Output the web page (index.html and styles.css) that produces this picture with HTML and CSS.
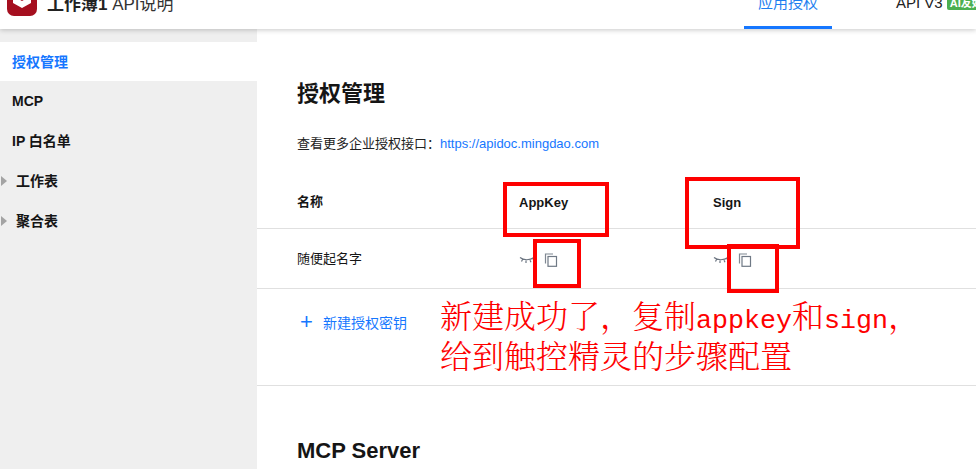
FILE: index.html
```html
<!DOCTYPE html>
<html lang="zh-CN">
<head>
    <meta charset="UTF-8">
    <meta name="viewport" content="width=device-width, initial-scale=1.0">
    <title>API说明</title>
    <link rel="stylesheet" href="styles.css">
</head>
<body>
    <header class="topbar">
        <div class="brand">
            <svg class="brand-logo" width="30" height="28" viewBox="0 0 30 28">
                <path d="M7 -10h16a7 7 0 0 1 7 7v21a7 7 0 0 1 -7 7h-16a7 7 0 0 1 -7 -7v-21a7 7 0 0 1 7 -7z" fill="#a50f1f"/>
                <path d="M6 5l9 5 9-5v7l-9 5-9-5z" fill="#fff"/>
                <path d="M6 3l9-4 9 4-9 5z" fill="#e7a7ad"/>
            </svg>
            <span class="brand-name"><b>工作薄1</b> API说明</span>
        </div>
        <nav class="tabs">
            <a class="tab tab-active">应用授权</a>
            <a class="tab tab-api">API V3 <span class="badge">AI友好</span></a>
        </nav>
    </header>

    <div class="layout">
        <aside class="sidebar">
            <div class="side-item side-active">授权管理</div>
            <div class="side-item">MCP</div>
            <div class="side-item">IP 白名单</div>
            <div class="side-item side-group"><i class="caret"></i>工作表</div>
            <div class="side-item side-group"><i class="caret"></i>聚合表</div>
        </aside>

        <main class="content">
            <section class="auth">
                <h2 class="section-title">授权管理</h2>
                <p class="more">查看更多企业授权接口：<a class="link">https://apidoc.mingdao.com</a></p>

                <div class="row row-head">
                    <div class="col-name">名称</div>
                    <div class="col-key">AppKey</div>
                    <div class="col-sign">Sign</div>
                </div>
                <div class="row row-body">
                    <div class="col-name">随便起名字</div>
                    <div class="col-key">
                        <svg class="eye" width="16" height="8" viewBox="0 0 16 8"><path d="M1 1.5c3.500 3 10 3 14 0M3.500 3.500l-1 2M7 4.500v2.500M11 4.300l1 2M14 2.800l1 1.500" fill="none" stroke="#6b7480" stroke-width="1.200"/></svg>
                        <svg class="copy" width="14" height="14" viewBox="0 0 14 14"><path d="M9 1h-7.500v9.500" fill="none" stroke="#7f8792" stroke-width="1.200"/><rect x="4" y="3.500" width="8.500" height="9.800" fill="none" stroke="#6f7985" stroke-width="1.200"/></svg>
                    </div>
                    <div class="col-sign">
                        <svg class="eye" width="16" height="8" viewBox="0 0 16 8"><path d="M1 1.500c3.500 3 10 3 14 0M3.500 3.500l-1 2M7 4.500v2.500M11 4.300l1 2M14 2.800l1 1.500" fill="none" stroke="#6b7480" stroke-width="1.200"/></svg>
                        <svg class="copy" width="14" height="14" viewBox="0 0 14 14"><path d="M9 1h-7.500v9.500" fill="none" stroke="#7f8792" stroke-width="1.200"/><rect x="4" y="3.500" width="8.500" height="9.800" fill="none" stroke="#6f7985" stroke-width="1.200"/></svg>
                    </div>
                </div>
                <a class="add-key"><span class="plus">+</span>新建授权密钥</a>
            </section>

            <section class="mcp">
                <h2 class="section-title">MCP Server</h2>
            </section>
        </main>
    </div>

    <div class="mark mark-key"></div>
    <div class="mark mark-sign"></div>
    <div class="mark mark-copy1"></div>
    <div class="mark mark-copy2"></div>
    <div class="note">新建成功了，复制<span class="note-latin">appkey</span>和<span class="note-latin">sign</span>，<br>给到触控精灵的步骤配置</div>
</body>
</html>
```

FILE: styles.css
```css
* {
    margin: 0;
    padding: 0;
    box-sizing: border-box;
}

html, body {
    height: 469px;
    overflow: hidden;
}

body {
    font-family: "Liberation Sans", "Noto Sans CJK SC", sans-serif;
    color: #151515;
    background: #fff;
    position: relative;
}

.topbar {
    height: 29px;
    display: flex;
    justify-content: space-between;
    background: #fff;
    box-shadow: 0 1px 5px rgba(0, 0, 0, 0.22);
    position: relative;
    z-index: 2;
    overflow: hidden;
}

.brand {
    display: flex;
    align-items: flex-start;
    padding-left: 7px;
}

.brand-logo {
    display: block;
    height: 28px;
    margin-top: -9px;
}

.brand-name {
    font-size: 17px;
    line-height: 24px;
    margin-top: -7px;
    margin-left: 10px;
    color: #333;
}

.brand-name b {
    color: #222;
}

.tabs {
    display: flex;
}

.tab {
    display: block;
    height: 36px;
    font-size: 15px;
    line-height: 20px;
    margin-top: -7px;
}

.tab-active {
    width: 88px;
    margin-right: 64px;
    text-align: center;
    color: #1e7ff0;
    border-bottom: 3px solid #1677ff;
}

.tab-api {
    width: 80px;
    white-space: nowrap;
    color: #222;
}

.badge {
    display: inline-block;
    background: #4caf50;
    color: #fff;
    font-size: 11px;
    font-weight: bold;
    line-height: 14px;
    padding: 0 3px;
    border-radius: 2px;
    vertical-align: 1px;
}

.layout {
    display: flex;
    height: 440px;
}

.sidebar {
    width: 257px;
    flex: none;
    background: #efefef;
    padding-top: 13px;
}

.side-item {
    height: 40px;
    line-height: 40px;
    padding-left: 12px;
    font-size: 14px;
    font-weight: bold;
    color: #151515;
}

.side-active {
    background: #fff;
    color: #1677ff;
    height: 39px;
}

.side-group {
    display: flex;
    align-items: center;
    padding-left: 1px;
}

.caret {
    width: 0;
    height: 0;
    border-left: 6px solid #a3a3a3;
    border-top: 5px solid transparent;
    border-bottom: 5px solid transparent;
    margin-right: 9px;
}

.content {
    flex: 1;
    min-width: 0;
}

.auth {
    padding-top: 50px;
    height: 357px;
    border-bottom: 1px solid #e0e0e0;
}

.section-title {
    font-size: 22px;
    line-height: 30px;
    font-weight: bold;
    padding-left: 40px;
    color: #151515;
}

.more {
    font-size: 13px;
    line-height: 18px;
    margin-top: 26px;
    padding-left: 40px;
    color: #222;
}

.link {
    color: #1677ff;
}

.row {
    display: flex;
    padding-left: 40px;
    border-bottom: 1px solid #e0e0e0;
    font-size: 13px;
}

.row-head {
    height: 55px;
    margin-top: 21px;
    align-items: center;
    font-weight: bold;
}

.row-body {
    height: 60px;
    align-items: center;
}

.col-name {
    width: 222px;
    flex: none;
    margin-top: -2px;
}

.col-key {
    width: 194px;
    flex: none;
    display: flex;
    align-items: center;
    gap: 9px;
    margin-top: 2px;
}

.col-sign {
    flex: 1;
    display: flex;
    align-items: center;
    gap: 9px;
    margin-top: 2px;
}

.add-key {
    display: flex;
    align-items: center;
    padding-left: 43px;
    height: 65px;
    font-size: 14px;
    color: #1677ff;
}

.plus {
    font-size: 22px;
    width: 23px;
}

.mcp {
    padding-top: 50px;
}

/* hand-drawn markup on top of the screenshot */
.mark {
    position: absolute;
    border: 4px solid #fe0000;
    z-index: 3;
}

.mark-key {
    left: 503px;
    top: 182px;
    width: 106px;
    height: 55px;
}

.mark-sign {
    left: 685px;
    top: 177px;
    width: 115px;
    height: 72px;
}

.mark-copy1 {
    left: 533px;
    top: 239px;
    width: 48px;
    height: 49px;
}

.mark-copy2 {
    left: 727px;
    top: 244px;
    width: 52px;
    height: 49px;
}

.note {
    position: absolute;
    left: 440px;
    top: 294px;
    z-index: 3;
    color: #fe0000;
    font-family: "Noto Serif CJK SC", "Noto Sans CJK SC", sans-serif;
    font-weight: 300;
    font-size: 32px;
    line-height: 40px;
    white-space: nowrap;
}

.note-latin {
    font-family: "Liberation Mono", monospace;
    font-size: 26.670px;
    line-height: 0;
}
```
